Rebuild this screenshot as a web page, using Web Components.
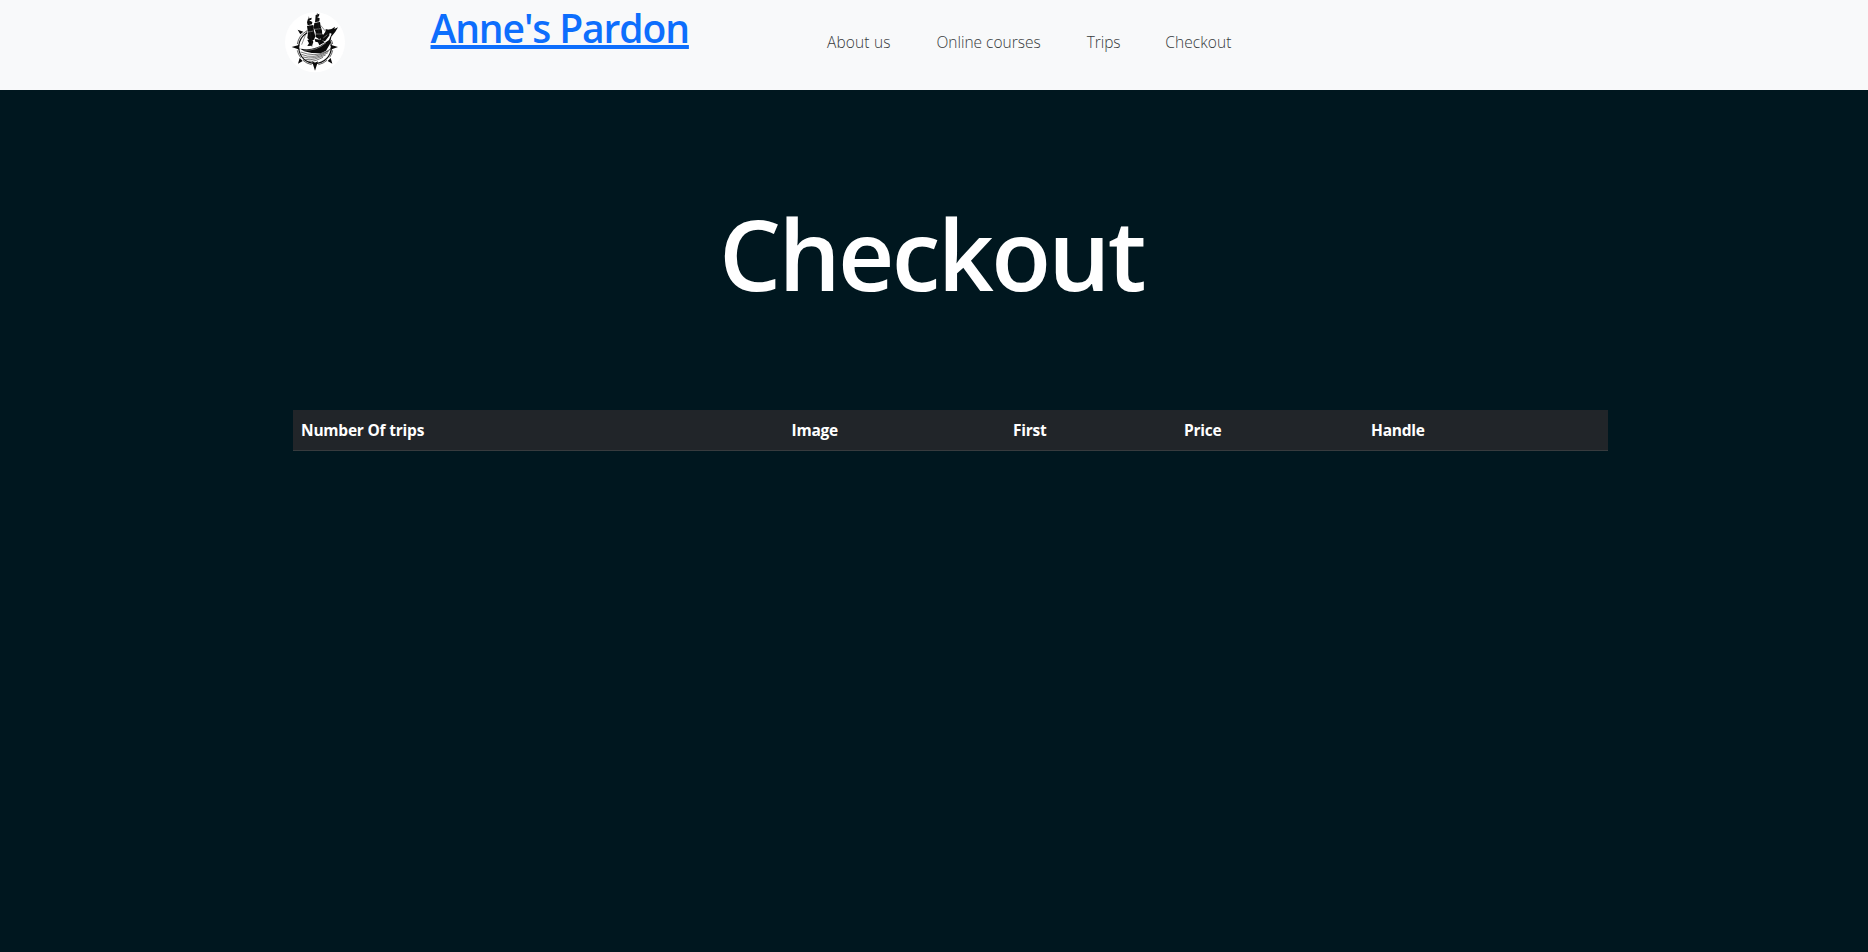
<!DOCTYPE html>
<html lang="en">
<head>
<meta charset="utf-8">
<title>Checkout</title>
<style>
html,body{margin:0;min-height:100%;background:#00171f}
body{font-family:"Open Sans","Noto Sans",sans-serif;font-size:16px;line-height:24px;color:#fff}
</style>
</head>
<body>
<site-header>
  <ship-logo slot="logo"></ship-logo>
  <brand-link slot="brand">Anne's Pardon</brand-link>
  <nav-link style="--w:64px;--ls:.15px">About us</nav-link>
  <nav-link style="--w:105px;--ls:0px">Online courses</nav-link>
  <nav-link style="--w:33px;--ls:-.1px">Trips</nav-link>
  <nav-link style="--w:68px;--ls:.1px">Checkout</nav-link>
</site-header>
<page-title>Checkout</page-title>
<trip-table>
  <trip-heading>Number Of trips</trip-heading>
  <trip-heading>Image</trip-heading>
  <trip-heading>First</trip-heading>
  <trip-heading>Price</trip-heading>
  <trip-heading>Handle</trip-heading>
</trip-table>
<script>
const component = (name, html) => {
  const template = document.createElement('template');
  template.innerHTML = html;
  customElements.define(name, class extends HTMLElement {
    constructor() {
      super();
      this.attachShadow({mode: 'open'}).append(template.content.cloneNode(true));
    }
  });
};

component('site-header', `
<style>
:host{display:flex;height:90px;box-sizing:border-box;background:#f8f9fa;padding-left:280px;align-items:flex-start}
.brand{margin-left:80.5px;width:396.5px}
nav{display:flex;gap:45.4px;padding-top:30px}
</style>
<slot name="logo"></slot>
<div class="brand"><slot name="brand"></slot></div>
<nav><slot></slot></nav>`);

component('ship-logo', `
<style>:host{display:block;width:70px;height:90px}svg{display:block}</style>
<svg width="70" height="90" viewBox="0 0 210 270" aria-hidden="true">
  <circle cx="105" cy="127" r="90" fill="#fff"/>
  <g fill="none" stroke="#111">
    <path d="M82 98A49 49 0 1 0 151 124" stroke-width="3.5"/>
    <path d="M80 93A54 54 0 0 0 52 132M52 151A54 54 0 0 0 62 173M69 181A54 54 0 0 0 95 194M115 194A54 54 0 0 0 141 181M149 172A54 54 0 0 0 158 151M158 132A54 54 0 0 0 154 120" stroke-width="2"/>
    <path d="M62 156q22 8 40 8t36-9 14-12M64 163q18 8 38 6t46-17M69 171q17 5 34 2t41-15M76 178q14 3 28-1t33-12M85 184q12 1 23-3t21-9" stroke-width="1.7"/>
  </g>
  <g fill="#0a0a0a">
    <path d="M35 141l24-7-3 7 3 8zM174 141l-23-7 3 7-3 8zM105 212l-9-28 9 4 9-4z"/>
    <path d="M53 89l17 6-9 8zM54 191l5-17 9 9zM157 191l-5-17-9 9z"/>
    <path d="M60 146l20 2q32-1 53-18l14-10 8-19-18-7 0-7 10 3 9-4 9-6-2 7 11-5-8 13-12 15-4 22-12 20-16 8-27-1-22-5z"/>
    <path d="M84 56l11-3-1 6-7 2 10 5-1 7-13 3-2-9zM107 45l11-4-1 8-6 3 8 3-1 9-13 3 1-10zM81 78l19-3 2 19 4 15-4 10-12 3-8-8 2-15zM103 69l17-3 2 13 4 13 1 18-9 8-11-7 0-14-6-15z"/>
    <path d="M118 98l12 6 10-14 12-2-5 20-12 16-13-4z"/>
    <path d="M82 120l14-4 4 10-4 11-14 1 5-8zM104 117l22 3 8 7-16 9-4-9-8-2z"/>
  </g>
  <path d="M84 96l16-3M104 88l18-2M107 102l18 0M70 150q40 4 68-22M130 114l12-10" fill="none" stroke="#fff" stroke-width="1.2"/>
  <path d="M122 76l26 32M82 90l-17 44M86 50l10 90M112 39l7 90" fill="none" stroke="#222" stroke-width="1.5"/>
</svg>`);

component('brand-link', `
<style>
:host{display:block}
a{display:inline-block;color:#0d6efd;font-size:39px;line-height:48px;font-weight:600;letter-spacing:-1.1px;white-space:nowrap;padding-top:4px;text-decoration:underline;text-decoration-thickness:4px;text-underline-offset:2px;text-decoration-skip-ink:none}
</style><a href="#"><slot></slot></a>`);

component('nav-link', `
<style>
:host{display:block;width:var(--w)}
a{color:#36393c;text-decoration:none;font-size:15.5px;font-weight:300;white-space:nowrap;letter-spacing:var(--ls)}
</style><a href="#"><slot></slot></a>`);

component('page-title', `
<style>
:host{display:block;height:320px;box-sizing:border-box;padding:103px 5px 0 0;text-align:center}
h1{margin:0;font-size:98px;line-height:120px;font-weight:600;letter-spacing:-2.7px}
</style><h1><slot></slot></h1>`);

component('trip-table', `
<style>
:host{display:grid;grid-template-columns:490.5px 221.5px 171px 187px 245px;width:1315px;height:41px;box-sizing:border-box;margin-left:293px;background:#212529;border-bottom:1px solid #373b3e}
</style><slot></slot>`);

component('trip-heading', `
<style>
:host{display:block;padding:8px;font-size:15.5px;font-weight:700;letter-spacing:-.22px;white-space:nowrap}
</style><slot></slot>`);
</script>
</body>
</html>
